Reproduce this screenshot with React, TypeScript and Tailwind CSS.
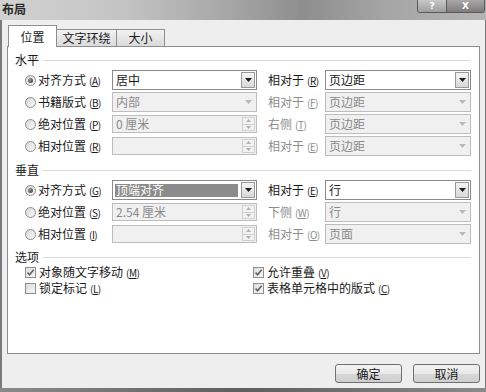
import React from "react";

type Field = {
  value: string;
  kind: "combo" | "spin";
  enabled?: boolean;
  selected?: boolean;
};

function Mn({ k }: { k: string }) {
  return (
    <span className="ml-[3px] text-[10px] tracking-[-0.5px]">
      (<span className="underline">{k}</span>)
    </span>
  );
}

function Radio({ checked }: { checked?: boolean }) {
  return (
    <span className="flex h-[11px] w-[11px] shrink-0 items-center justify-center rounded-full border border-[#8c8c8c] bg-[linear-gradient(135deg,#d6d6d6,#fbfbfb)]">
      {checked && <span className="h-[5px] w-[5px] rounded-full bg-[radial-gradient(circle_at_35%_35%,#9a9a9a,#2f2f2f)]" />}
    </span>
  );
}

function Check({ checked }: { checked?: boolean }) {
  return (
    <span className="flex h-[11px] w-[11px] shrink-0 items-center justify-center border border-[#8e8e8e] bg-[linear-gradient(135deg,#dcdcdc,#f8f8f8)]">
      {checked && (
        <svg width="9" height="9" viewBox="0 0 9 9">
          <path d="M1.5 4.6 L3.6 6.8 L7.6 1.8" fill="none" stroke="#606060" strokeWidth="1.6" />
        </svg>
      )}
    </span>
  );
}

function Input({ f }: { f: Field }) {
  const on = f.enabled;
  return (
    <div
      className={`flex items-stretch ${f.kind === "spin" ? "h-[18px]" : "h-[20px]"} border ${
        on ? "border-[#8a8a8a] bg-white" : "border-[#bdbdbd] bg-[#f0f0f0]"
      }`}
    >
      <div className="flex min-w-0 flex-1 items-center px-[2px]">
        {f.selected ? (
          <span className="flex h-[13px] w-full items-center bg-[#8b8b8b] pl-[1px] text-[12px] leading-none text-white">
            {f.value}
          </span>
        ) : (
          <span className={`pl-[1px] text-[12px] leading-none ${on ? "text-[#1a1a1a]" : "text-[#8a8a8a]"}`}>
            {f.value}
          </span>
        )}
      </div>
      {f.kind === "combo" ? (
        <div
          className={`m-[1px] flex w-[14px] items-center justify-center ${
            on ? "border border-[#9a9a9a] bg-[linear-gradient(#f4f4f4,#d8d8d8)]" : ""
          }`}
        >
          <svg width="7" height="4" viewBox="0 0 7 4">
            <path d="M0 0 H7 L3.5 4 Z" fill={on ? "#1e1e1e" : "#b8b8b8"} />
          </svg>
        </div>
      ) : (
        <div className="m-[1px] flex w-[13px] flex-col border border-[#d0d0d0] bg-[#f2f2f2]">
          <div className="flex flex-1 items-center justify-center border-b border-[#d0d0d0]">
            <svg width="5" height="3" viewBox="0 0 5 3">
              <path d="M0 3 H5 L2.5 0 Z" fill="#b0b0b0" />
            </svg>
          </div>
          <div className="flex flex-1 items-center justify-center">
            <svg width="5" height="3" viewBox="0 0 5 3">
              <path d="M0 0 H5 L2.5 3 Z" fill="#b0b0b0" />
            </svg>
          </div>
        </div>
      )}
    </div>
  );
}

type Row = {
  label: string;
  k: string;
  checked?: boolean;
  left: Field;
  rLabel: string;
  rk: string;
  right: Field;
};

const horizontal: Row[] = [
  { label: "对齐方式", k: "A", checked: true, left: { value: "居中", kind: "combo", enabled: true }, rLabel: "相对于", rk: "R", right: { value: "页边距", kind: "combo", enabled: true } },
  { label: "书籍版式", k: "B", left: { value: "内部", kind: "combo" }, rLabel: "相对于", rk: "F", right: { value: "页边距", kind: "combo" } },
  { label: "绝对位置", k: "P", left: { value: "0 厘米", kind: "spin" }, rLabel: "右侧", rk: "T", right: { value: "页边距", kind: "combo" } },
  { label: "相对位置", k: "R", left: { value: "", kind: "spin" }, rLabel: "相对于", rk: "E", right: { value: "页边距", kind: "combo" } },
];

const vertical: Row[] = [
  { label: "对齐方式", k: "G", checked: true, left: { value: "顶端对齐", kind: "combo", enabled: true, selected: true }, rLabel: "相对于", rk: "E", right: { value: "行", kind: "combo", enabled: true } },
  { label: "绝对位置", k: "S", left: { value: "2.54 厘米", kind: "spin" }, rLabel: "下侧", rk: "W", right: { value: "行", kind: "combo" } },
  { label: "相对位置", k: "I", left: { value: "", kind: "spin" }, rLabel: "相对于", rk: "O", right: { value: "页面", kind: "combo" } },
];

function Heading({ text }: { text: string }) {
  return (
    <div className="flex h-[14px] items-center pr-[1px]">
      <span className="text-[12px] leading-none">{text}</span>
      <span className="ml-[4px] h-px flex-1 bg-[#d8d8d8]" />
    </div>
  );
}

function PosRow({ r }: { r: Row }) {
  const rOn = r.right.enabled;
  return (
    <div className="flex h-[22px] items-center pl-[10px]">
      <Radio checked={r.checked} />
      <span className="ml-[2px] w-[74px] whitespace-nowrap text-[12px] leading-none">
        {r.label}
        <Mn k={r.k} />
      </span>
      <div className="w-[145px]">
        <Input f={r.left} />
      </div>
      <span className={`ml-[11px] w-[57px] whitespace-nowrap text-[12px] leading-none ${rOn ? "" : "text-[#8d8d8d]"}`}>
        {r.rLabel}
        <Mn k={r.rk} />
      </span>
      <div className="w-[146px]">
        <Input f={r.right} />
      </div>
    </div>
  );
}

function CheckItem({ label, k, checked }: { label: string; k: string; checked?: boolean }) {
  return (
    <span className="flex items-center gap-[3px] whitespace-nowrap text-[12px] leading-none">
      <Check checked={checked} />
      <span>
        {label}
        <Mn k={k} />
      </span>
    </span>
  );
}

export default function App() {
  return (
    <div className="flex h-[392px] w-[486px] flex-col overflow-hidden bg-[#7a7a7a] font-['Noto_Sans_CJK_SC',sans-serif] text-[#1a1a1a]">
      {/* Title bar */}
      <div className="flex h-[20px] shrink-0 items-start justify-between bg-[linear-gradient(90deg,#d2d2d2_0%,#c4c4c4_25%,#a2a2a2_50%,#8e8e8e_62%,#a6a6a6_80%,#b4b4b4_100%)] pl-[2px] pr-[1px]">
        <span className="pt-[1px] text-[12px] font-bold leading-[16px] text-[#2a2a2a]">布局</span>
        <div className="flex h-[13px] overflow-hidden rounded-b-[3px] border border-t-0 border-[#5a5a5a]">
          <div className="flex w-[29px] items-center justify-center border-r border-[#5a5a5a] bg-[linear-gradient(#c8c8c8,#9e9e9e)] font-['DejaVu_Sans',sans-serif] text-[9px] font-bold leading-[12px] text-white">
            ?
          </div>
          <div className="flex w-[37px] items-center justify-center bg-[linear-gradient(#a8a8a8,#7c7c7c)] font-['DejaVu_Sans',sans-serif] text-[9px] font-bold leading-[12px] text-white">
            X
          </div>
        </div>
      </div>

      {/* Client area */}
      <div className="ml-[2px] mr-[1px] flex flex-1 flex-col bg-[#eeeeee] px-[5px]">
        {/* Tabs */}
        <div className="relative z-10 flex h-[26px] shrink-0 items-end pl-[1px]">
          <div className="-mb-px flex h-[22px] w-[49px] items-center justify-center border border-b-0 border-[#8e8e8e] bg-white text-[12px]">
            位置
          </div>
          <div className="flex h-[17px] w-[60px] items-center justify-center border border-l-0 border-b-0 border-[#8e8e8e] bg-[linear-gradient(#f2f2f2,#dadada)] text-[12px]">
            文字环绕
          </div>
          <div className="flex h-[17px] w-[48px] items-center justify-center border border-l-0 border-b-0 border-[#8e8e8e] bg-[linear-gradient(#f2f2f2,#dadada)] text-[12px]">
            大小
          </div>
        </div>

        {/* Panel */}
        <div className="flex h-[308px] shrink-0 flex-col border border-[#8e8e8e] bg-white px-[7px] pt-[6px]">
          <Heading text="水平" />
          <div className="mt-[2px]">
            {horizontal.map((r) => (
              <PosRow key={r.label + r.k} r={r} />
            ))}
          </div>
          <div className="mt-[6px]">
            <Heading text="垂直" />
          </div>
          <div className="mt-[2px]">
            {vertical.map((r) => (
              <PosRow key={r.label + r.k} r={r} />
            ))}
          </div>
          <div className="mt-[5px]">
            <Heading text="选项" />
          </div>
          <div className="flex h-[16px] items-center pl-[10px]">
            <div className="w-[228px]">
              <CheckItem label="对象随文字移动" k="M" checked />
            </div>
            <CheckItem label="允许重叠" k="V" checked />
          </div>
          <div className="flex h-[16px] items-center pl-[10px]">
            <div className="w-[228px]">
              <CheckItem label="锁定标记" k="L" />
            </div>
            <CheckItem label="表格单元格中的版式" k="C" checked />
          </div>
        </div>

        {/* Buttons */}
        <div className="mt-[10px] flex justify-end gap-[11px]">
          <button className="h-[19px] w-[67px] rounded-[3px] border border-[#707070] bg-[linear-gradient(#f4f4f4_0%,#e8e8e8_50%,#d8d8d8_51%,#cfcfcf_100%)] text-[12px] leading-none">
            确定
          </button>
          <button className="h-[19px] w-[67px] rounded-[3px] border border-[#707070] bg-[linear-gradient(#f4f4f4_0%,#e8e8e8_50%,#d8d8d8_51%,#cfcfcf_100%)] text-[12px] leading-none">
            取消
          </button>
        </div>
      </div>
      <div className="h-[4px] shrink-0 bg-[linear-gradient(90deg,#8a8a8a,#5e5e5e_50%,#8a8a8a)]" />
    </div>
  );
}
